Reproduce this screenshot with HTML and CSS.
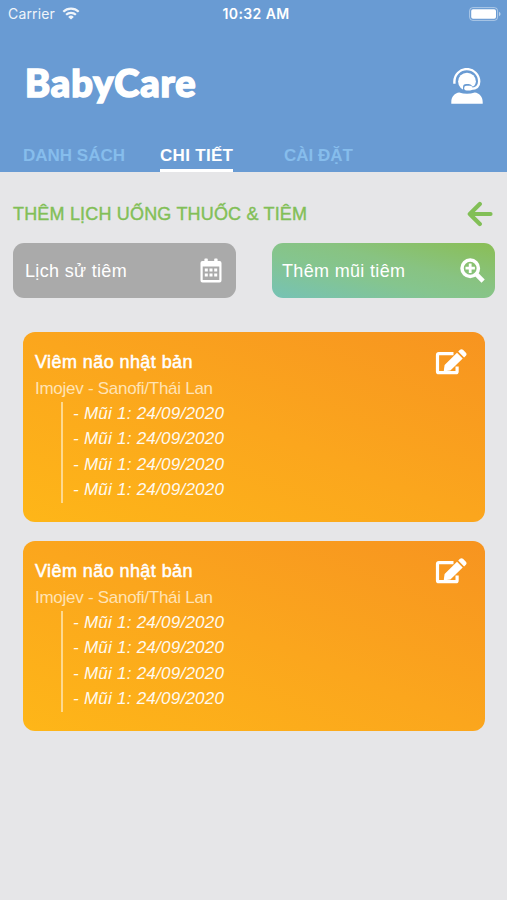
FILE: index.html
```html
<!DOCTYPE html>
<html lang="vi">
<head>
    <meta charset="UTF-8">
    <meta name="viewport" content="width=device-width, initial-scale=1.0">
    <title>BabyCare</title>
    <link rel="stylesheet" href="styles.css">
</head>
<body>
    <header class="header">
        <!-- Status bar -->
        <div class="status-bar">
            <div class="carrier">
                <span>Carrier</span>
                <svg width="18" height="13" viewBox="0 0 18 13" fill="none" stroke="#fff" stroke-width="2.2">
                    <path d="M1.3 4.7a11 11 0 0 1 15.4 0"/>
                    <path d="M4.1 7.8a7 7 0 0 1 9.8 0"/>
                    <path d="M9 12.6L6.2 9.9a4 4 0 0 1 5.6 0z" fill="#fff" stroke="none"/>
                </svg>
            </div>
            <span class="time">10:32 AM</span>
            <svg class="battery" width="32" height="14" viewBox="0 0 32 14">
                <rect x=".6" y=".6" width="28" height="12.8" rx="3.2" fill="none" stroke="#fff" stroke-opacity=".45"/>
                <rect x="2.2" y="2.2" width="24.8" height="9.6" rx="1.8" fill="#fff"/>
                <path d="M30 4.8q1.6.7 1.6 2.2T30 9.2z" fill="#fff" fill-opacity=".55"/>
            </svg>
        </div>

        <div class="brand-row">
            <h1 class="brand">BabyCare</h1>
            <svg class="support" width="32" height="36" viewBox="0 0 32 36">
                <circle cx="16" cy="13.6" r="8.9" fill="#fff"/>
                <path d="M12 23.5v-4.300q0-3.200 3.200-3.200h2.600q2.400 0 3.700 2.600 2.200-.6 3.300-3.400v8.300z" fill="#699bd3"/>
                <path d="M3.400 15.800v-2.300a12.200 12.200 0 0 1 24.800 0c0 4.800-3.200 7.300-8.200 7.300" fill="none" stroke="#fff" stroke-width="2.400"/>
                <rect x="13.200" y="17.700" width="8.200" height="4.900" rx="2.300" fill="#fff"/>
                <path d="M.3 35.800v-1.800C.3 28.300 3.800 25 8.200 24.400q7.800 2.800 15.600 0C28.200 25 31.700 28.300 31.700 34v1.800z" fill="#fff"/>
            </svg>
        </div>

        <nav class="tabs">
            <a class="tab tab-list">DANH SÁCH</a>
            <a class="tab tab-detail active">CHI TIẾT</a>
            <a class="tab tab-settings">CÀI ĐẶT</a>
        </nav>
    </header>

    <main class="content">
        <div class="title-row">
            <h2>THÊM LỊCH UỐNG THUỐC &amp; TIÊM</h2>
            <svg width="26" height="26" viewBox="0 0 26 26" fill="none" stroke="#82bf57" stroke-width="4.2" stroke-linecap="round" stroke-linejoin="round">
                <path d="M12.800 3L2.800 13l10 10M3.500 13H23.500"/>
            </svg>
        </div>

        <div class="actions">
            <button type="button" class="btn btn-history">
                <span>Lịch sử tiêm</span>
                <svg width="22" height="25" viewBox="0 0 22 25" fill="#fff">
                    <path fill-rule="evenodd" d="M4.400 3V1.200q0-.8.8-.8H7q.8 0 .8.8V3h6.400V1.200q0-.8.8-.8h1.800q.8 0 .8.8V3h2q1.900 0 1.900 1.900v17.600q0 1.900-1.900 1.900H2.400Q.5 24.400.5 22.500V4.900Q.5 3 2.400 3zM2.700 8.400v13.600h16.600v-13.600z"/>
                    <path d="M4.800 10.500h3v3h-3zM9.500 10.500h3v3h-3zM14.200 10.500h3v3h-3zM4.800 15.600h3v3h-3zM9.500 15.600h3v3h-3zM14.200 15.600h3v3h-3z"/>
                </svg>
            </button>
            <button type="button" class="btn btn-add">
                <span>Thêm mũi tiêm</span>
                <svg width="25" height="25" viewBox="0 0 25 25" fill="none" stroke="#fff">
                    <circle cx="10.200" cy="10.200" r="8.200" stroke-width="3.500"/>
                    <path d="M10.200 5.500v9.400M5.500 10.200h9.400" stroke-width="2.800"/>
                    <path d="M16.200 16.200l6.900 6.900" stroke-width="4.600"/>
                </svg>
            </button>
        </div>

        <section class="card">
            <div class="card-head">
                <h3>Viêm não nhật bản</h3>
                <svg width="32" height="27" viewBox="0 0 32 27">
                    <path d="M18.500 4.600H3.800Q2.500 4.600 2.500 5.900v16.500q0 1.300 1.300 1.300h17q1.300 0 1.300-1.300V17.500" fill="none" stroke="#fff" stroke-width="3.200"/>
                    <path d="M22 3.800l5.700 5.700L15.400 21.500l-5.800.8q-.9 0-.8-.9l.8-5.300zM23.200 2.600l1.800-1.800q1.500-1.200 3 0l2.900 2.900q1.300 1.500 0 3l-1.800 1.800z" fill="#fff"/>
                </svg>
            </div>
            <p class="vaccine">Imojev - Sanofi/Thái Lan</p>
            <ul>
                <li>- Mũi 1: 24/09/2020</li>
                <li>- Mũi 1: 24/09/2020</li>
                <li>- Mũi 1: 24/09/2020</li>
                <li>- Mũi 1: 24/09/2020</li>
            </ul>
        </section>

        <section class="card">
            <div class="card-head">
                <h3>Viêm não nhật bản</h3>
                <svg width="32" height="27" viewBox="0 0 32 27">
                    <path d="M18.500 4.600H3.800Q2.500 4.600 2.500 5.900v16.500q0 1.300 1.300 1.300h17q1.300 0 1.300-1.300V17.500" fill="none" stroke="#fff" stroke-width="3.200"/>
                    <path d="M22 3.800l5.700 5.700L15.400 21.500l-5.800.8q-.9 0-.8-.9l.8-5.300zM23.200 2.600l1.800-1.800q1.500-1.200 3 0l2.900 2.900q1.300 1.500 0 3l-1.800 1.800z" fill="#fff"/>
                </svg>
            </div>
            <p class="vaccine">Imojev - Sanofi/Thái Lan</p>
            <ul>
                <li>- Mũi 1: 24/09/2020</li>
                <li>- Mũi 1: 24/09/2020</li>
                <li>- Mũi 1: 24/09/2020</li>
                <li>- Mũi 1: 24/09/2020</li>
            </ul>
        </section>
    </main>
</body>
</html>
```
FILE: styles.css
```css
* {
    box-sizing: border-box;
}

body {
    margin: 0;
    height: 900px;
    overflow: hidden;
    background-color: #e6e6e8;
    font-family: 'Liberation Sans', Arial, sans-serif;
    color: #fff;
}

h1, h2, h3, p, ul {
    margin: 0;
    padding: 0;
}

svg {
    display: block;
    flex: none;
}

/* Header */
.header {
    height: 172px;
    background-color: #699bd3;
}

.status-bar {
    display: grid;
    grid-template-columns: 1fr auto 1fr;
    align-items: center;
    height: 27px;
    padding: 0 6px 0 8px;
    font-family: Inter, sans-serif;
    font-size: 14px;
    white-space: nowrap;
}

.carrier {
    display: flex;
    align-items: center;
    gap: 7px;
    letter-spacing: 0.15px;
    opacity: 0.9;
}

.time {
    margin-left: 3px;
    font-weight: 600;
    letter-spacing: 0.4px;
}

.battery {
    justify-self: end;
}

.brand-row {
    display: flex;
    justify-content: space-between;
    height: 113px;
    padding: 0 24px 0 25px;
}

.brand {
    margin-top: 32px;
    font-family: Lato, sans-serif;
    font-size: 38px;
    line-height: 46px;
    font-weight: 900;
    letter-spacing: 0.9px;
    -webkit-text-stroke: 1.6px #fff;
}

.support {
    margin-top: 41px;
}

.tabs {
    display: flex;
    height: 32px;
    padding-left: 23px;
}

.tab {
    height: 32px;
    line-height: 32px;
    font-size: 17px;
    font-weight: bold;
    color: #86bdec;
    white-space: nowrap;
}

.tab-list {
    width: 137px;
}

.tab-detail {
    width: 73px;
    margin-right: 51px;
    letter-spacing: 0.3px;
}

.tab.active {
    color: #fff;
    border-bottom: 3px solid #fff;
}

/* Content */
.content {
    padding: 0 12px 0 13px;
}

.title-row {
    display: flex;
    justify-content: space-between;
    align-items: center;
    height: 71px;
    padding: 12px 2px 0 0;
}

h2 {
    padding-top: 1px;
    font-size: 18px;
    font-weight: normal;
    letter-spacing: 0.18px;
    color: #82bf57;
    -webkit-text-stroke: 0.4px #82bf57;
    white-space: nowrap;
}

.actions {
    display: flex;
    justify-content: space-between;
    margin-bottom: 34px;
}

.btn {
    display: flex;
    justify-content: space-between;
    align-items: center;
    width: 223px;
    height: 55px;
    border: none;
    border-radius: 11px;
    color: #fff;
    font-family: inherit;
    font-size: 18px;
    letter-spacing: 0.33px;
    white-space: nowrap;
}

.btn span {
    padding-top: 1px;
}

.btn-history {
    padding: 0 14px 0 12px;
    background-color: #aaa;
}

.btn-add {
    padding: 0 10px;
    background: linear-gradient(to top right, #76c2b5, #85c58e 40%, #88c382 60%, #8abe55);
}

.card {
    height: 189.5px;
    margin: 0 10px 19.5px;
    padding: 17px 18px 0 12px;
    border-radius: 12px;
    background: linear-gradient(to top right, #feb618, #fba61d 50%, #f79420);
}

.card-head {
    display: flex;
    justify-content: space-between;
    height: 26px;
}

h3 {
    font-size: 18px;
    line-height: 26px;
    font-weight: normal;
    letter-spacing: 0.42px;
    -webkit-text-stroke: 0.5px #fff;
    white-space: nowrap;
}

.vaccine {
    height: 27px;
    font-size: 17px;
    line-height: 28px;
    letter-spacing: -0.27px;
    color: #ffe3b5;
    white-space: nowrap;
}

ul {
    width: 200px;
    height: 101px;
    margin-left: 26px;
    padding-left: 10px;
    border-left: 2px solid #fed98e;
    list-style: none;
    font-style: italic;
    font-size: 17px;
    letter-spacing: 0.25px;
}

li {
    height: 25.25px;
    line-height: 23px;
    color: #fffaf0;
    white-space: nowrap;
}
```
